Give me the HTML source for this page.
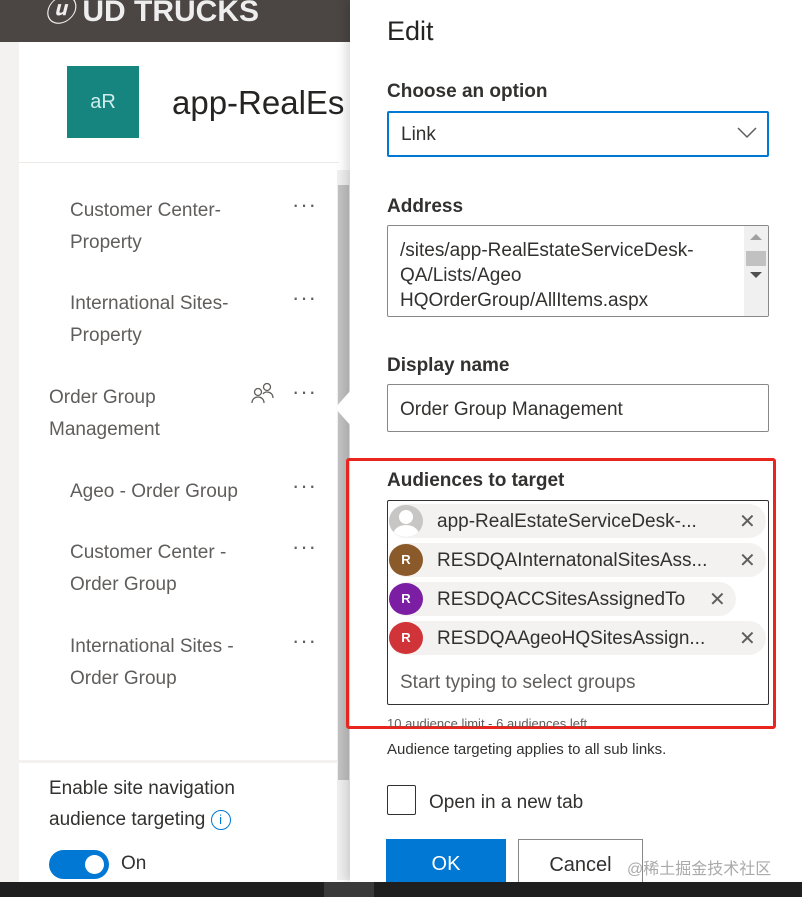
<!DOCTYPE html>
<html><head><meta charset="utf-8"><style>
*{box-sizing:border-box;margin:0;padding:0}
body{width:802px;height:897px;overflow:hidden;background:#fff;font-family:"Liberation Sans","Noto Sans CJK SC",sans-serif;color:#323130;position:relative}
.a{position:absolute}
.nav{font-size:19px;color:#605e5c;line-height:32px}
.dots{font-size:22px;color:#605e5c;letter-spacing:1px;line-height:10px}
.lbl{font-size:19px;font-weight:bold;color:#323130}
.chip{position:absolute;left:389px;height:34px;border-radius:17px;background:#f3f2f1;font-size:19px;line-height:34px;padding-left:48px;color:#323130}
.av{position:absolute;left:0;top:1px;width:34px;height:32px;border-radius:50%;color:#fff;font-size:13px;font-weight:bold;text-align:center;line-height:32px}
.x{position:absolute;top:0;font-size:20px;color:#605e5c}
</style></head><body>
<div class="a" style="left:0;top:0;width:350px;height:42px;background:#4b4543"></div>
<div class="a" style="left:44px;top:-14px;color:#eee;font-size:30px;font-weight:bold;font-style:italic">ⓤ <span style="font-style:normal">UD TRUCKS</span></div>
<div class="a" style="left:0;top:42px;width:19px;height:840px;background:#f3f2f1"></div>
<div class="a" style="left:19px;top:162px;width:320px;height:1px;background:#edebe9"></div>
<div class="a" style="left:67px;top:66px;width:72px;height:72px;background:#168580;color:#cfeeec;font-size:20px;text-align:center;line-height:72px">aR</div>
<div class="a" style="left:172px;top:84px;font-size:33px;color:#252423">app-RealEs</div>
<div class="a" style="left:337px;top:170px;width:13px;height:710px;background:#f0f0f0"></div>
<div class="a" style="left:338px;top:185px;width:11px;height:595px;background:#c2c2c2"></div>
<div class="a nav" style="left:70px;top:195px">Customer Center-<br>Property</div>
<div class="a nav" style="left:70px;top:288px">International Sites-<br>Property</div>
<div class="a nav" style="left:49px;top:382px">Order Group<br>Management</div>
<div class="a nav" style="left:70px;top:476px">Ageo - Order Group</div>
<div class="a nav" style="left:70px;top:537px">Customer Center -<br>Order Group</div>
<div class="a nav" style="left:70px;top:631px">International Sites -<br>Order Group</div>
<div class="a dots" style="left:292px;top:200px">···</div>
<div class="a dots" style="left:292px;top:293px">···</div>
<div class="a dots" style="left:292px;top:387px">···</div>
<div class="a dots" style="left:292px;top:481px">···</div>
<div class="a dots" style="left:292px;top:542px">···</div>
<div class="a dots" style="left:292px;top:636px">···</div>
<svg class="a" style="left:250px;top:381px" width="24" height="24" viewBox="0 0 24 24" fill="none" stroke="#605e5c" stroke-width="1.3"><circle cx="8" cy="11" r="3.5"/><path d="M2 22c0-4 3-6 6-6s6 2 6 6"/><circle cx="17" cy="6" r="3.5"/><path d="M13 13c1-1.5 2.5-2 4-2 3 0 6 2 6 6"/></svg>
<div class="a" style="left:19px;top:760px;width:318px;height:3px;background:#f3f2f1"></div>
<div class="a" style="left:49px;top:773px;font-size:19px;color:#323130;line-height:31px">Enable site navigation<br>audience targeting <span style="display:inline-block;width:20px;height:20px;border:1.5px solid #0078d4;border-radius:50%;color:#0078d4;font-size:13px;text-align:center;line-height:17px;vertical-align:middle">i</span></div>
<div class="a" style="left:49px;top:850px;width:60px;height:29px;border-radius:15px;background:#0078d4"></div>
<div class="a" style="left:85px;top:855px;width:19px;height:19px;border-radius:50%;background:#fff"></div>
<div class="a" style="left:121px;top:853px;font-size:19px">On</div>
<!-- right panel -->
<div class="a" style="left:350px;top:0;width:452px;height:882px;background:#fff;box-shadow:-4px 0 10px rgba(0,0,0,.15)"></div>
<svg class="a" style="left:333px;top:390px" width="20" height="36"><path d="M18 0 L2 18 L18 36 Z" fill="#fff"/></svg>
<div class="a" style="left:387px;top:16px;font-size:27px;color:#252423">Edit</div>
<div class="a lbl" style="left:387px;top:81px">Choose an option</div>
<div class="a" style="left:387px;top:111px;width:382px;height:46px;border:2px solid #0078d4;border-radius:2px;font-size:19px;line-height:44px;padding-left:12px">Link
<svg class="a" style="right:10px;top:14px" width="20" height="12" viewBox="0 0 20 12"><path d="M1 1l9 9 9-9" fill="none" stroke="#605e5c" stroke-width="1.5"/></svg></div>
<div class="a lbl" style="left:387px;top:196px">Address</div>
<div class="a" style="left:387px;top:225px;width:382px;height:92px;border:1px solid #8a8886;border-radius:2px;font-size:19px;line-height:25px;padding:12px 0 0 12px;color:#323130">/sites/app-RealEstateServiceDesk-<br>QA/Lists/Ageo<br>HQOrderGroup/AllItems.aspx</div>
<div class="a" style="left:744px;top:226px;width:24px;height:90px;background:#f0f0f0"></div>
<div class="a" style="left:746px;top:251px;width:20px;height:15px;background:#c1c1c1"></div>
<div class="a" style="left:750px;top:234px;border:6px solid transparent;border-bottom-color:#a0a0a0;border-top:0"></div>
<div class="a" style="left:750px;top:272px;border:6px solid transparent;border-top-color:#505050;border-bottom:0"></div>
<div class="a lbl" style="left:387px;top:355px">Display name</div>
<div class="a" style="left:387px;top:384px;width:382px;height:48px;border:1px solid #8a8886;border-radius:2px;font-size:19px;line-height:50px;padding-left:12px">Order Group Management</div>
<div class="a" style="left:346px;top:458px;width:430px;height:271px;border:3px solid #e8261d;border-radius:3px"></div>
<div class="a lbl" style="left:387px;top:470px">Audiences to target</div>
<div class="a" style="left:387px;top:500px;width:382px;height:205px;border:1px solid #323130;border-radius:2px"></div>
<div class="chip" style="top:504px;width:377px;line-height:36px">app-RealEstateServiceDesk-...<div class="av" style="background:#c8c6c4;overflow:hidden"><div style="position:absolute;left:10px;top:5px;width:14px;height:14px;border-radius:50%;background:#fff"></div><div style="position:absolute;left:4px;top:20px;width:26px;height:20px;border-radius:50%;background:#fff"></div></div><span class="x" style="left:350px">✕</span></div>
<div class="chip" style="top:543px;width:377px;line-height:36px">RESDQAInternatonalSitesAss...<div class="av" style="background:#8b5a2b">R</div><span class="x" style="left:350px">✕</span></div>
<div class="chip" style="top:582px;width:347px;line-height:36px">RESDQACCSitesAssignedTo<div class="av" style="background:#7c1ea3">R</div><span class="x" style="left:320px">✕</span></div>
<div class="chip" style="top:621px;width:377px;line-height:36px">RESDQAAgeoHQSitesAssign...<div class="av" style="background:#d13438">R</div><span class="x" style="left:350px">✕</span></div>
<div class="a" style="left:400px;top:672px;font-size:19px;color:#605e5c">Start typing to select groups</div>
<div class="a" style="left:387px;top:716px;font-size:13px;color:#605e5c;height:11px;overflow:hidden">10 audience limit - 6 audiences left</div>
<div class="a" style="left:387px;top:741px;font-size:15px;color:#323130">Audience targeting applies to all sub links.</div>
<div class="a" style="left:387px;top:785px;width:29px;height:30px;border:1px solid #323130;border-radius:2px"></div>
<div class="a" style="left:429px;top:792px;font-size:19px">Open in a new tab</div>
<div class="a" style="left:386px;top:839px;width:120px;height:43px;background:#0078d4;color:#fff;font-size:20px;text-align:center;line-height:50px">OK</div>
<div class="a" style="left:518px;top:839px;width:125px;height:43px;border:1px solid #8a8886;border-bottom:0;font-size:20px;text-align:center;line-height:50px">Cancel</div>
<div class="a" style="left:627px;top:855px;font-size:16px;color:#aaa">@稀土掘金技术社区</div>
<div class="a" style="left:0;top:882px;width:802px;height:15px;background:#1f1f1f"></div>
<div class="a" style="left:324px;top:882px;width:50px;height:15px;background:#3a3a3a"></div>
</body></html>
